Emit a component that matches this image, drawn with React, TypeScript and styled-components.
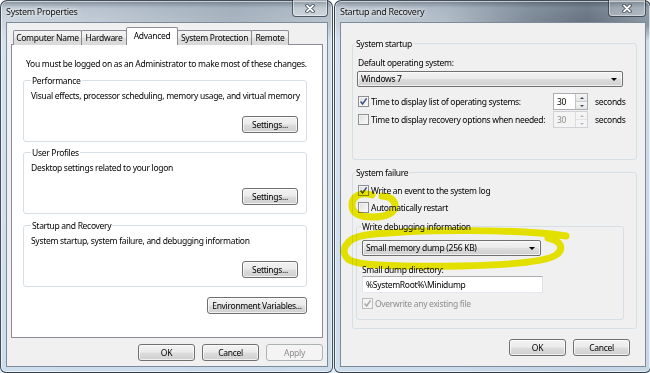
import React from "react";
import styled, { createGlobalStyle, css } from "styled-components";

const FONT = `"Noto Sans", "Open Sans", "Liberation Sans", sans-serif`;

const GlobalStyle = createGlobalStyle`
  html, body { margin: 0; padding: 0; }
  body {
    width: 650px;
    height: 373px;
    overflow: hidden;
    background: #eef3f8;
    font-family: ${FONT};
    font-size: 8.5px;
    letter-spacing: -0.3px;
    color: #000;
  }
  * { box-sizing: border-box; }
  fieldset { min-width: 0; }
`;

const Desktop = styled.div`
  position: relative;
  width: 650px;
  height: 373px;
  display: flex;
  gap: 1px;
  overflow: hidden;
  background: linear-gradient(180deg, #ffffff 0%, #e4eef8 100%);
`;

const Window = styled.div<{ $w: number; $dark?: boolean }>`
  flex: none;
  width: ${(p) => p.$w}px;
  height: 373px;
  border: 1px solid rgba(28, 38, 50, 0.78);
  border-radius: 7px 7px 6px 6px;
  padding: 0 4px 5px 5px;
  display: flex;
  flex-direction: column;
  box-shadow: inset 0 0 0 1px rgba(255, 255, 255, 0.6);
  background:
    linear-gradient(180deg, rgba(70, 84, 98, 0.55) 0px, rgba(150, 165, 180, 0.25) 7px, rgba(255, 255, 255, 0) 22px),
    linear-gradient(180deg, rgba(255, 255, 255, 0) 24px, rgba(214, 228, 242, 0.9) 40px, rgba(206, 222, 238, 0.9) 100%),
    ${(p) =>
      p.$dark
        ? "linear-gradient(90deg, #c9d2dc 0%, #b3bec9 35%, #7d8996 62%, #66717e 80%, #8c98a5 100%)"
        : "linear-gradient(90deg, #cfd8e1 0%, #c2ccd7 30%, #a9b4c0 70%, #b9c4cf 100%)"};
`;

const TitleBar = styled.div`
  flex: none;
  height: 21px;
  display: flex;
  align-items: flex-start;
  justify-content: space-between;
`;

const Title = styled.div`
  padding: 4px 0 0 0;
  font-size: 9px;
  letter-spacing: -0.3px;
  line-height: 14px;
  color: #111;
  text-shadow: 0 0 6px rgba(255, 255, 255, 0.95), 0 0 3px rgba(255, 255, 255, 0.9);
`;

const CloseButton = styled.div<{ $w: number }>`
  width: ${(p) => p.$w}px;
  height: 17px;
  margin-top: -1px;
  border: 1px solid rgba(30, 40, 52, 0.7);
  border-top: none;
  border-radius: 0 0 4px 4px;
  background: linear-gradient(180deg, rgba(255, 255, 255, 0.15), rgba(255, 255, 255, 0.35));
  box-shadow: inset 0 0 0 1px rgba(255, 255, 255, 0.45);
  display: flex;
  align-items: center;
  justify-content: center;
`;

const ClientArea = styled.div`
  flex: 1;
  background: #f0f0f0;
  border: 1px solid #7d8b99;
  display: flex;
  flex-direction: column;
`;

const LeftClient = styled(ClientArea)`
  padding: 4px 4px 0 4px;
`;

const RightClient = styled(ClientArea)`
  padding: 0 8px 0 11px;
`;

const TabStrip = styled.div`
  display: flex;
  align-items: flex-end;
  height: 18px;
  padding-left: 2px;
  margin-bottom: -1px;
  position: relative;
  z-index: 1;
`;

const Tab = styled.div<{ $w: number; $active?: boolean }>`
  width: ${(p) => p.$w}px;
  height: 15px;
  margin-left: -1px;
  &:first-child { margin-left: 0; }
  border: 1px solid #898c95;
  border-bottom: none;
  border-radius: 2px 2px 0 0;
  background: linear-gradient(180deg, #f3f3f3 0%, #ebebeb 50%, #dedede 51%, #d9d9d9 100%);
  display: flex;
  align-items: center;
  justify-content: center;
  line-height: 12px;
  white-space: nowrap;
  ${(p) =>
    p.$active &&
    css`
      height: 18px;
      background: #fff;
      position: relative;
      z-index: 2;
      padding-bottom: 2px;
    `}
`;

const TabPanel = styled.div`
  height: 294px;
  background: #fff;
  border: 1px solid #898c95;
  padding: 12px 15px 0 11px;
  display: flex;
  flex-direction: column;
`;

const Note = styled.div`
  margin-left: 3px;
  line-height: 13px;
  white-space: nowrap;
`;

const Group = styled.fieldset<{ $mt: number; $pb?: number; $pl?: number }>`
  margin: ${(p) => p.$mt}px 0 0 0;
  border: 1px solid #d5dfe5;
  border-radius: 3px;
  padding: 2px 8px ${(p) => p.$pb ?? 8}px ${(p) => p.$pl ?? 7}px;
  display: flex;
  flex-direction: column;
`;

const Legend = styled.legend<{ $ml?: number }>`
  padding: 0 1px;
  margin-left: ${(p) => p.$ml ?? 0}px;
  line-height: 13px;
  color: #000;
  white-space: nowrap;
`;

const Desc = styled.div`
  line-height: 13px;
  white-space: nowrap;
`;

const Button = styled.div<{ $w: number; $mt?: number; $disabled?: boolean }>`
  width: ${(p) => p.$w}px;
  height: 17px;
  margin-top: ${(p) => p.$mt ?? 0}px;
  border: 1px solid #707070;
  border-radius: 3px;
  background: linear-gradient(180deg, #f2f2f2 0%, #ebebeb 48%, #dddddd 52%, #cfcfcf 100%);
  box-shadow: inset 0 0 0 1px rgba(255, 255, 255, 0.7);
  display: flex;
  align-items: center;
  justify-content: center;
  line-height: 12px;
  white-space: nowrap;
  color: ${(p) => (p.$disabled ? "#8d8d8d" : "#000")};
  ${(p) =>
    p.$disabled &&
    css`
      border-color: #adb2b5;
      background: #f4f4f4;
      box-shadow: none;
    `}
`;

const RightAligned = styled.div`
  display: flex;
  justify-content: flex-end;
`;

const ButtonRow = styled.div<{ $mt: number; $mr?: number }>`
  display: flex;
  justify-content: flex-end;
  gap: 7px;
  margin-top: ${(p) => p.$mt}px;
  margin-right: ${(p) => p.$mr ?? 0}px;
`;

/* right dialog */

const Label = styled.div<{ $mt?: number }>`
  line-height: 13px;
  margin-top: ${(p) => p.$mt ?? 0}px;
  white-space: nowrap;
`;

const Combo = styled.div<{ $w: number; $mt?: number; $ml?: number }>`
  width: ${(p) => p.$w}px;
  height: 16px;
  margin-top: ${(p) => p.$mt ?? 0}px;
  margin-left: ${(p) => p.$ml ?? 0}px;
  border: 1px solid #707070;
  border-radius: 2px;
  background: linear-gradient(180deg, #f2f2f2 0%, #ebebeb 48%, #dddddd 52%, #cfcfcf 100%);
  box-shadow: inset 0 0 0 1px rgba(255, 255, 255, 0.7);
  display: flex;
  align-items: center;
  justify-content: space-between;
  padding: 0 5px 0 3px;
  line-height: 12px;
  white-space: nowrap;
`;

const Arrow = styled.span`
  width: 0;
  height: 0;
  border-left: 3px solid transparent;
  border-right: 3px solid transparent;
  border-top: 3px solid #000;
`;

const CheckRow = styled.div<{ $mt?: number }>`
  display: flex;
  align-items: center;
  height: 13px;
  margin-top: ${(p) => p.$mt ?? 0}px;
  white-space: nowrap;
`;

const Box = styled.span<{ $disabled?: boolean }>`
  flex: none;
  width: 11px;
  height: 11px;
  margin-right: 2px;
  border: 1px solid ${(p) => (p.$disabled ? "#bcbcbc" : "#8e8f8f")};
  background: ${(p) =>
    p.$disabled
      ? "#f4f4f4"
      : "linear-gradient(135deg, #dcdcdc 0%, #f0f0f0 60%, #fbfbfb 100%)"};
  box-shadow: inset 0 0 0 1px #f4f4f4;
  display: flex;
  align-items: center;
  justify-content: center;
`;

const CheckText = styled.span<{ $disabled?: boolean }>`
  color: ${(p) => (p.$disabled ? "#8d8d8d" : "#000")};
`;

const SpinRow = styled.div<{ $mt: number }>`
  display: grid;
  grid-template-columns: 188px 35px auto;
  column-gap: 7px;
  align-items: center;
  height: 17px;
  margin-top: ${(p) => p.$mt}px;
  white-space: nowrap;
`;

const Spin = styled.div<{ $disabled?: boolean }>`
  height: 17px;
  display: flex;
  border: 1px solid ${(p) => (p.$disabled ? "#cfd1d6" : "#abadb3")};
  background: ${(p) => (p.$disabled ? "#f4f4f4" : "#fff")};
  color: ${(p) => (p.$disabled ? "#8d8d8d" : "#000")};
`;

const SpinValue = styled.div`
  flex: 1;
  padding-left: 3px;
  line-height: 15px;
`;

const SpinButtons = styled.div<{ $disabled?: boolean }>`
  width: 12px;
  display: flex;
  flex-direction: column;
  border-left: 1px solid ${(p) => (p.$disabled ? "#dcdcdc" : "#c2c7cf")};
`;

const SpinHalf = styled.div<{ $down?: boolean; $disabled?: boolean }>`
  flex: 1;
  display: flex;
  align-items: center;
  justify-content: center;
  background: ${(p) => (p.$disabled ? "#f4f4f4" : "linear-gradient(180deg, #f6f6f6, #e4e4e4)")};
  border-top: ${(p) => (p.$down ? `1px solid ${p.$disabled ? "#e2e2e2" : "#c9ccd2"}` : "none")};
  &::after {
    content: "";
    border-left: 2px solid transparent;
    border-right: 2px solid transparent;
    ${(p) =>
      p.$down
        ? `border-top: 2px solid ${p.$disabled ? "#b8b8b8" : "#3b4a63"};`
        : `border-bottom: 2px solid ${p.$disabled ? "#b8b8b8" : "#3b4a63"};`}
  }
`;

const Seconds = styled.span``;

const TextInput = styled.div<{ $w: number }>`
  width: ${(p) => p.$w}px;
  height: 17px;
  border: 1px solid #abadb3;
  border-color: #abadb3 #dbdfe6 #e3e9ef #e2e3ea;
  background: #fff;
  padding-left: 3px;
  line-height: 15px;
  white-space: nowrap;
`;

const SubGroup = styled(Group)`
  margin-left: -2px;
  width: 268px;
`;

const Highlight = styled.svg`
  position: absolute;
  left: 0;
  top: 0;
  width: 650px;
  height: 373px;
  pointer-events: none;
  mix-blend-mode: multiply;
`;

const CloseGlyph = () => (
  <svg width="10" height="9" viewBox="0 0 10 9">
    <path d="M2 1.5 L8 7.5 M8 1.5 L2 7.5" stroke="#35404c" strokeWidth="3.4" strokeLinecap="round" />
    <path d="M2 1.5 L8 7.5 M8 1.5 L2 7.5" stroke="#fff" strokeWidth="1.8" strokeLinecap="round" />
  </svg>
);

const Check: React.FC<{ checked?: boolean; disabled?: boolean; children: React.ReactNode; mt?: number }> = ({
  checked,
  disabled,
  children,
  mt,
}) => (
  <CheckRow $mt={mt}>
    <Box $disabled={disabled}>
      {checked && (
        <svg width="9" height="9" viewBox="0 0 9 9">
          <path
            d="M1.6 4.6 L3.6 7 L7.6 1.4"
            fill="none"
            stroke={disabled ? "#a8a8a8" : "#3c4f7e"}
            strokeWidth="1.5"
          />
        </svg>
      )}
    </Box>
    <CheckText $disabled={disabled}>{children}</CheckText>
  </CheckRow>
);

const SpinBox: React.FC<{ value: string; disabled?: boolean }> = ({ value, disabled }) => (
  <Spin $disabled={disabled}>
    <SpinValue>{value}</SpinValue>
    <SpinButtons $disabled={disabled}>
      <SpinHalf $disabled={disabled} />
      <SpinHalf $down $disabled={disabled} />
    </SpinButtons>
  </Spin>
);

export default function App() {
  return (
    <>
      <GlobalStyle />
      <Desktop>
        <Window $w={333}>
          <TitleBar>
            <Title>System Properties</Title>
            <CloseButton $w={36}>
              <CloseGlyph />
            </CloseButton>
          </TitleBar>
          <LeftClient>
            <TabStrip>
              <Tab $w={69}>Computer Name</Tab>
              <Tab $w={46}>Hardware</Tab>
              <Tab $w={52} $active>
                Advanced
              </Tab>
              <Tab $w={75}>System Protection</Tab>
              <Tab $w={38}>Remote</Tab>
            </TabStrip>
            <TabPanel>
              <Note>You must be logged on as an Administrator to make most of these changes.</Note>
              <Group $mt={4}>
                <Legend>Performance</Legend>
                <Desc>Visual effects, processor scheduling, memory usage, and virtual memory</Desc>
                <RightAligned>
                  <Button $w={56} $mt={14}>
                    Settings...
                  </Button>
                </RightAligned>
              </Group>
              <Group $mt={4}>
                <Legend>User Profiles</Legend>
                <Desc>Desktop settings related to your logon</Desc>
                <RightAligned>
                  <Button $w={56} $mt={14}>
                    Settings...
                  </Button>
                </RightAligned>
              </Group>
              <Group $mt={5}>
                <Legend>Startup and Recovery</Legend>
                <Desc>System startup, system failure, and debugging information</Desc>
                <RightAligned>
                  <Button $w={56} $mt={14}>
                    Settings...
                  </Button>
                </RightAligned>
              </Group>
              <RightAligned>
                <Button $w={100} $mt={10}>
                  Environment Variables...
                </Button>
              </RightAligned>
            </TabPanel>
            <ButtonRow $mt={6}>
              <Button $w={57}>OK</Button>
              <Button $w={57}>Cancel</Button>
              <Button $w={57} $disabled>
                Apply
              </Button>
            </ButtonRow>
          </LeftClient>
        </Window>

        <Window $w={317} $dark>
          <TitleBar>
            <Title>Startup and Recovery</Title>
            <CloseButton $w={38}>
              <CloseGlyph />
            </CloseButton>
          </TitleBar>
          <RightClient>
            <Group $mt={14} $pb={31} $pl={5}>
              <Legend $ml={-3}>System startup</Legend>
              <Label $mt={4}>Default operating system:</Label>
              <Combo $w={266} $mt={2} $ml={-1}>
                <span>Windows 7</span>
                <Arrow />
              </Combo>
              <SpinRow $mt={6}>
                <Check checked>Time to display list of operating systems:</Check>
                <SpinBox value="30" />
                <Seconds>seconds</Seconds>
              </SpinRow>
              <SpinRow $mt={1}>
                <Check>Time to display recovery options when needed:</Check>
                <SpinBox value="30" disabled />
                <Seconds>seconds</Seconds>
              </SpinRow>
            </Group>
            <Group $mt={6} $pl={5}>
              <Legend $ml={-3}>System failure</Legend>
              <Check checked mt={3}>
                Write an event to the system log
              </Check>
              <Check mt={4}>Automatically restart</Check>
              <SubGroup $mt={6} $pb={9} $pl={5}>
                <Legend $ml={-1}>Write debugging information</Legend>
                <Combo $w={179} $mt={5}>
                  <span>Small memory dump (256 KB)</span>
                  <Arrow />
                </Combo>
                <Label $mt={7}>Small dump directory:</Label>
                <TextInput $w={181}>%SystemRoot%\Minidump</TextInput>
                <Check checked disabled mt={4}>
                  Overwrite any existing file
                </Check>
              </SubGroup>
            </Group>
            <ButtonRow $mt={10} $mr={7}>
              <Button $w={57}>OK</Button>
              <Button $w={57}>Cancel</Button>
            </ButtonRow>
          </RightClient>
        </Window>

        <Highlight viewBox="0 0 650 373">
          <g fill="none" stroke="#f2ee00" strokeLinecap="round" strokeLinejoin="round">
            <path
              d="M372 195 C360 191 352 197 352 205 C352 213 358 217 372 217 C386 217 396 213 395 205 C394 199 388 196 382 196"
              strokeWidth="7"
            />
            <path
              d="M566 236 C520 229 420 229 366 235 C344 238 340 252 348 259 C356 266 400 267 460 266 C510 265 546 262 556 255 C564 249 562 241 548 238"
              strokeWidth="7"
            />
          </g>
        </Highlight>
      </Desktop>
    </>
  );
}
